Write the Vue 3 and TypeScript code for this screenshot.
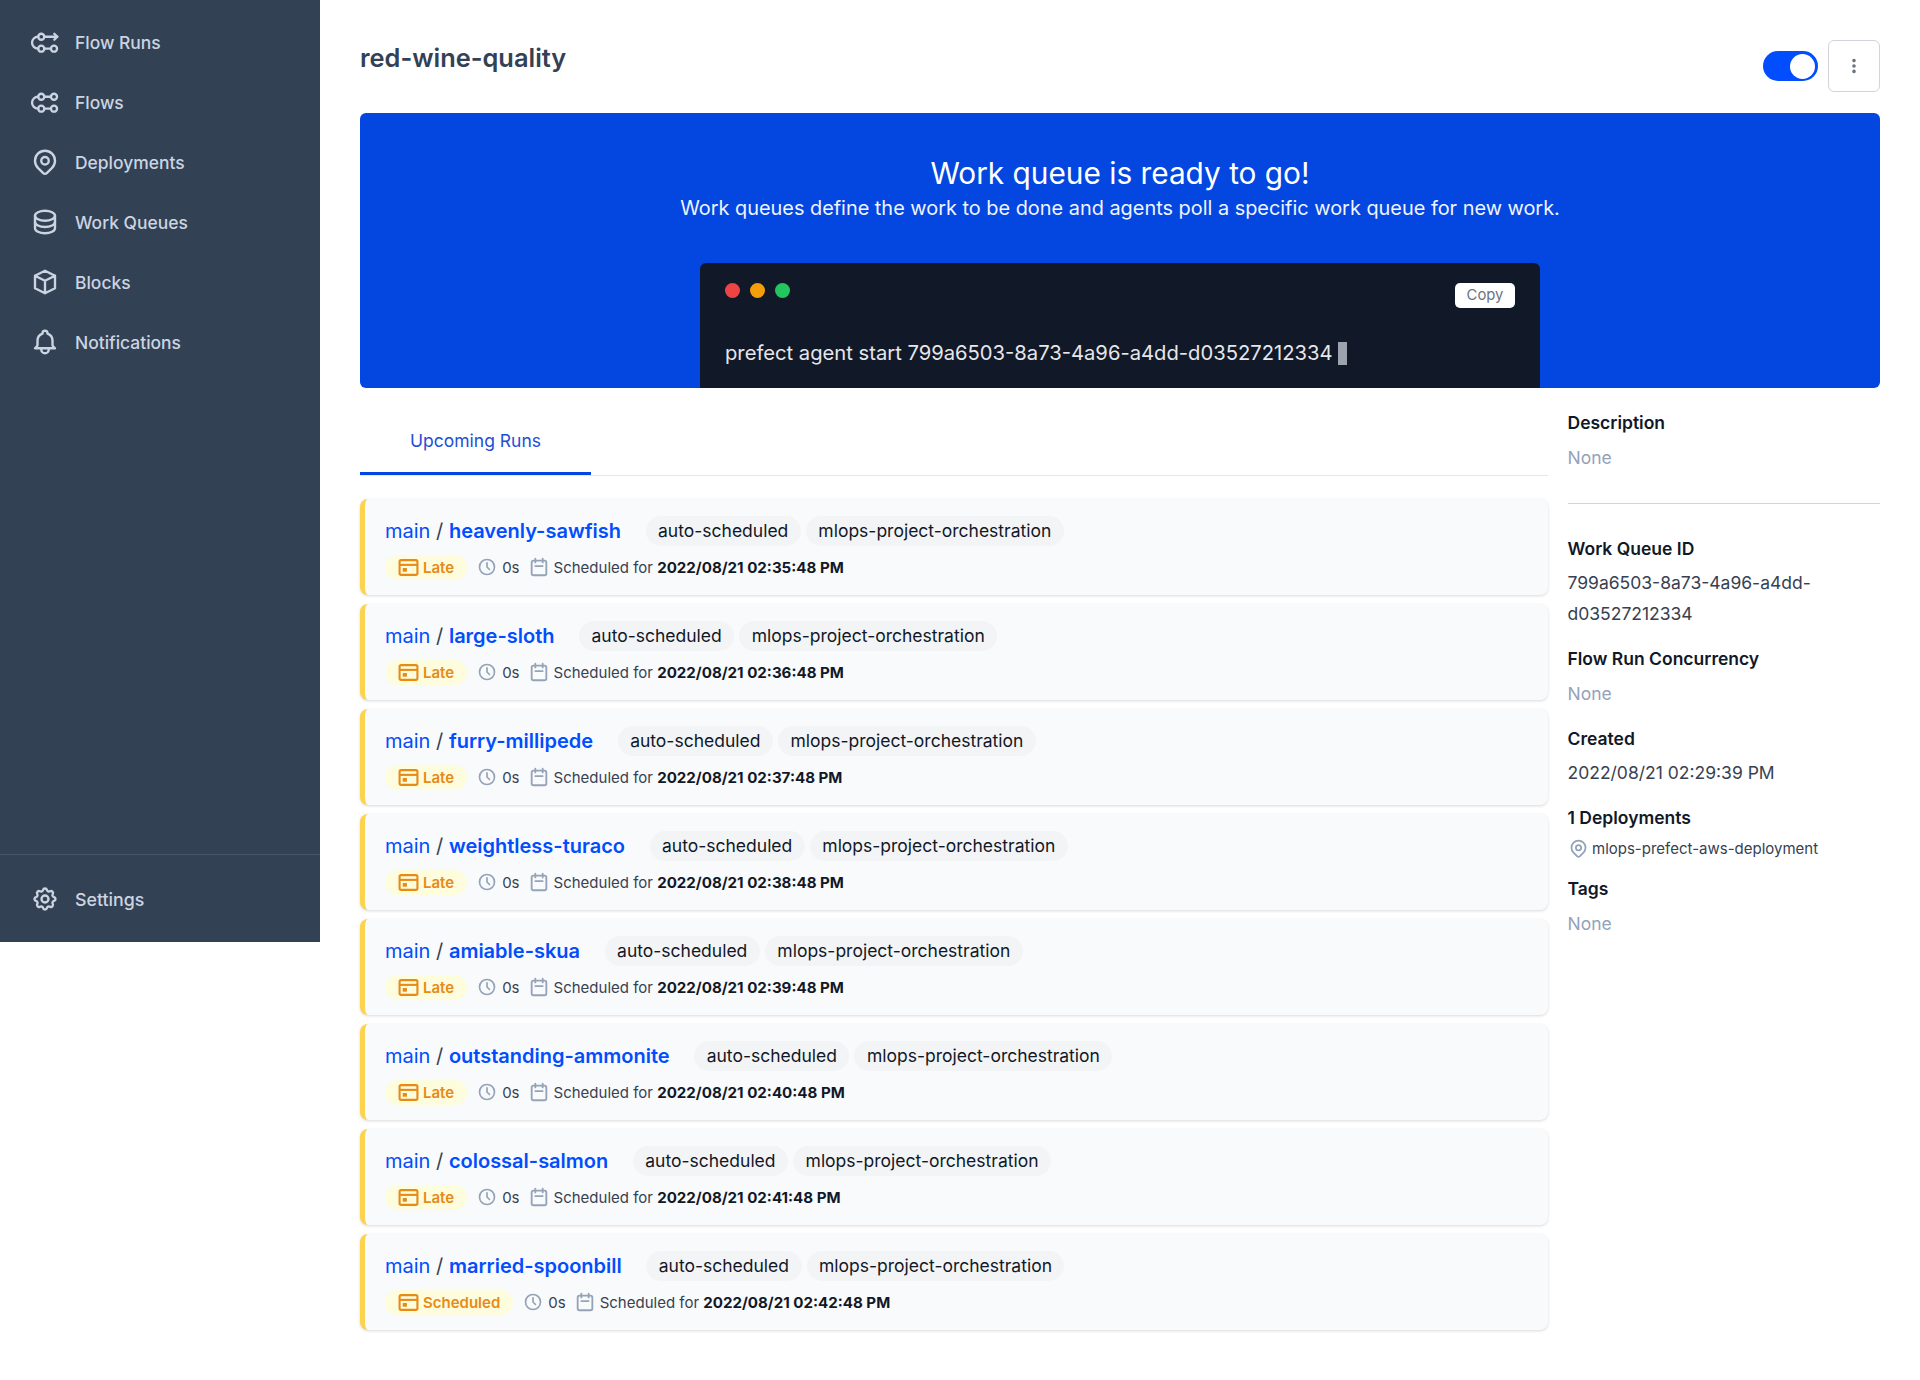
<template>
  <div class="app">
    <aside class="sidebar">
      <nav class="nav">
        <a v-for="item in navItems" :key="item.label" class="nav-item">
          <svg class="nav-icon" :viewBox="item.viewBox" fill="none" stroke="currentColor" :stroke-width="item.stroke" stroke-linecap="round" stroke-linejoin="round">
            <path v-for="d in item.paths" :key="d" :d="d" />
          </svg>
          <span>{{ item.label }}</span>
        </a>
      </nav>
      <div class="nav-bottom">
        <a class="nav-item">
          <svg class="nav-icon" viewBox="-0.85 -0.85 25.7 25.7" fill="none" stroke="currentColor" stroke-width="2" stroke-linecap="round" stroke-linejoin="round">
            <path d="M10.325 4.317c.426-1.756 2.924-1.756 3.35 0a1.724 1.724 0 0 0 2.573 1.066c1.543-.94 3.31.826 2.37 2.37a1.724 1.724 0 0 0 1.065 2.572c1.756.426 1.756 2.924 0 3.35a1.724 1.724 0 0 0-1.066 2.573c.94 1.543-.826 3.31-2.37 2.37a1.724 1.724 0 0 0-2.572 1.065c-.426 1.756-2.924 1.756-3.35 0a1.724 1.724 0 0 0-2.573-1.066c-1.543.94-3.31-.826-2.37-2.37a1.724 1.724 0 0 0-1.065-2.572c-1.756-.426-1.756-2.924 0-3.35a1.724 1.724 0 0 0 1.066-2.573c-.94-1.543.826-3.31 2.37-2.37.996.608 2.296.07 2.572-1.065z" />
            <path d="M15 12a3 3 0 1 1-6 0 3 3 0 0 1 6 0z" />
          </svg>
          <span>Settings</span>
        </a>
      </div>
    </aside>

    <main class="main">
      <header class="page-head">
        <h1>red-wine-quality</h1>
        <div class="head-actions">
          <span class="toggle"><span class="knob"></span></span>
          <button type="button" class="menu-button">
            <svg viewBox="0 0 20 20" fill="currentColor"><path d="M10 6a2 2 0 1 1 0-4 2 2 0 0 1 0 4zM10 12a2 2 0 1 1 0-4 2 2 0 0 1 0 4zM10 18a2 2 0 1 1 0-4 2 2 0 0 1 0 4z" /></svg>
          </button>
        </div>
      </header>

      <section class="banner">
        <h2>Work queue is ready to go!</h2>
        <p>Work queues define the work to be done and agents poll a specific work queue for new work.</p>
        <div class="terminal">
          <div class="terminal-top">
            <div class="dots">
              <i class="red"></i><i class="amber"></i><i class="green"></i>
            </div>
            <button type="button" class="copy">Copy</button>
          </div>
          <div class="command">prefect agent start 799a6503-8a73-4a96-a4dd-d03527212334<span class="cursor"></span></div>
        </div>
      </section>

      <div class="columns">
        <div class="left">
          <div class="tabs"><span class="tab">Upcoming Runs</span></div>
          <div class="runs">
            <article v-for="run in runs" :key="run.name" class="run">
              <div class="run-top">
                <span class="run-name"><a class="flow">main</a> / <a class="name">{{ run.name }}</a></span>
                <span class="tags">
                  <span class="tag">auto-scheduled</span>
                  <span class="tag">mlops-project-orchestration</span>
                </span>
              </div>
              <div class="run-meta">
                <span class="state">
                  <svg viewBox="0 0 20 20" fill="none" stroke="currentColor" stroke-width="2">
                    <rect x="1.5" y="3" width="17" height="14" rx="1.5" />
                    <path d="M1.5 7.5h17" />
                    <rect x="4.5" y="10.5" width="4" height="3.5" fill="currentColor" stroke="none" />
                  </svg>
                  {{ run.state }}
                </span>
                <span class="meta clock">
                  <svg viewBox="0 0 24 24" fill="none" stroke="currentColor" stroke-width="2" stroke-linecap="round" stroke-linejoin="round"><circle cx="12" cy="12" r="9" /><path d="M12 7v5l3 3" /></svg>
                  0s
                </span>
                <span class="meta calendar">
                  <svg viewBox="0 0 24 24" fill="none" stroke="currentColor" stroke-width="2" stroke-linecap="round" stroke-linejoin="round"><rect x="4" y="5" width="16" height="16" rx="2" /><path d="M8 3v4M16 3v4M8 11h8" /></svg>
                  <span>Scheduled for <b>{{ run.time }}</b></span>
                </span>
              </div>
            </article>
          </div>
        </div>

        <aside class="details">
          <div class="detail first">
            <h3>Description</h3>
            <p class="none">None</p>
          </div>
          <hr />
          <div class="detail">
            <h3>Work Queue ID</h3>
            <p>799a6503-8a73-4a96-a4dd-<br />d03527212334</p>
          </div>
          <div class="detail">
            <h3>Flow Run Concurrency</h3>
            <p class="none">None</p>
          </div>
          <div class="detail">
            <h3>Created</h3>
            <p>2022/08/21 02:29:39 PM</p>
          </div>
          <div class="detail">
            <h3>1 Deployments</h3>
            <div class="deployment">
              <svg viewBox="0 0 24 24" fill="none" stroke="currentColor" stroke-width="2" stroke-linecap="round" stroke-linejoin="round"><path d="M17.66 16.66 13.41 20.9a2 2 0 0 1-2.83 0l-4.24-4.24a8 8 0 1 1 11.32 0z" /><circle cx="12" cy="11" r="3" /></svg>
              mlops-prefect-aws-deployment
            </div>
          </div>
          <div class="detail">
            <h3>Tags</h3>
            <p class="none">None</p>
          </div>
        </aside>
      </div>
    </main>
  </div>
</template>

<script setup lang="ts">
interface NavItem {
  label: string;
  viewBox: string;
  stroke: number;
  paths: string[];
}

interface Run {
  name: string;
  state: string;
  time: string;
}

const flowBox = '-0.85 -0.85 25.7 25.7';

const flowPaths = [
  'M8.8 10.1a2.6 2.6 0 1 0 0-5.2 2.6 2.6 0 0 0 0 5.2z',
  'M8.8 20.3a2.6 2.6 0 1 0 0-5.2 2.6 2.6 0 0 0 0 5.2z',
  'M19.7 20.3a2.6 2.6 0 1 0 0-5.2 2.6 2.6 0 0 0 0 5.2z',
  'M11.4 17.7h5.7',
  'M6.2 7.5H6a5.1 5.1 0 0 0 0 10.2h.2'
];

const navItems: NavItem[] = [
  {
    label: 'Flow Runs',
    viewBox: flowBox,
    stroke: 2,
    paths: [...flowPaths, 'M11.4 7.5h11.1', 'M20 5l2.5 2.5L20 10']
  },
  {
    label: 'Flows',
    viewBox: flowBox,
    stroke: 2,
    paths: [...flowPaths, 'M11.4 7.5h5.7', 'M19.7 10.1a2.6 2.6 0 1 0 0-5.2 2.6 2.6 0 0 0 0 5.2z']
  },
  {
    label: 'Deployments',
    viewBox: '0 0 24 24',
    stroke: 1.9,
    paths: ['M17.66 16.66 13.41 20.9a2 2 0 0 1-2.83 0l-4.24-4.24a8 8 0 1 1 11.32 0z', 'M15 11a3 3 0 1 1-6 0 3 3 0 0 1 6 0z']
  },
  {
    label: 'Work Queues',
    viewBox: '0 0 24 24',
    stroke: 1.9,
    paths: ['M4 7c0 2.2 3.6 4 8 4s8-1.8 8-4-3.6-4-8-4-8 1.8-8 4z', 'M4 7v10c0 2.2 3.6 4 8 4s8-1.8 8-4V7', 'M4 12c0 2.2 3.6 4 8 4s8-1.8 8-4']
  },
  {
    label: 'Blocks',
    viewBox: '0 0 24 24',
    stroke: 1.9,
    paths: ['M20 7l-8-4-8 4m16 0l-8 4m8-4v10l-8 4m0-10L4 7m8 4v10M4 7v10l8 4']
  },
  {
    label: 'Notifications',
    viewBox: '0 0 24 24',
    stroke: 1.9,
    paths: ['M15 17h5l-1.405-1.405A2.032 2.032 0 0 1 18 14.158V11a6 6 0 0 0-4-5.659V5a2 2 0 1 0-4 0v.341C7.67 6.165 6 8.388 6 11v3.159c0 .538-.214 1.055-.595 1.436L4 17h5m6 0v1a3 3 0 1 1-6 0v-1m6 0H9']
  }
];

const runs: Run[] = [
  { name: 'heavenly-sawfish', state: 'Late', time: '2022/08/21 02:35:48 PM' },
  { name: 'large-sloth', state: 'Late', time: '2022/08/21 02:36:48 PM' },
  { name: 'furry-millipede', state: 'Late', time: '2022/08/21 02:37:48 PM' },
  { name: 'weightless-turaco', state: 'Late', time: '2022/08/21 02:38:48 PM' },
  { name: 'amiable-skua', state: 'Late', time: '2022/08/21 02:39:48 PM' },
  { name: 'outstanding-ammonite', state: 'Late', time: '2022/08/21 02:40:48 PM' },
  { name: 'colossal-salmon', state: 'Late', time: '2022/08/21 02:41:48 PM' },
  { name: 'married-spoonbill', state: 'Scheduled', time: '2022/08/21 02:42:48 PM' }
];
</script>

<style>
html,
body {
  margin: 0;
  background: #fff;
}
</style>

<style scoped>
.app {
  display: flex;
  align-items: flex-start;
  min-height: 1380px;
  font-family: Inter, "Liberation Sans", sans-serif;
  color: #1f2937;
}

.sidebar {
  flex: 0 0 320px;
  height: 942px;
  box-sizing: border-box;
  display: flex;
  flex-direction: column;
  justify-content: space-between;
  background: #334155;
}

.nav {
  padding-top: 12px;
}

.nav-item {
  display: flex;
  align-items: center;
  gap: 15px;
  height: 60px;
  padding-left: 30px;
  color: #cbd5e1;
  font-size: 17.45px;
  font-weight: 500;
}

.nav-icon {
  width: 30px;
  height: 30px;
  flex: none;
}

.nav-bottom {
  border-top: 1px solid #475569;
  padding: 14px 0 13px;
}

.nav-bottom .nav-item {
  font-size: 17.8px;
}

.main {
  flex: 1;
  min-width: 0;
  padding: 0 40px;
}

.page-head {
  display: flex;
  justify-content: space-between;
  height: 113px;
}

h1 {
  margin: 41.5px 0 0;
  font-size: 25.4px;
  line-height: 32px;
  font-weight: 600;
  color: #334155;
}

.head-actions {
  display: flex;
  align-items: center;
  gap: 10px;
  height: 52px;
  margin-top: 40px;
}

.toggle {
  display: block;
  width: 55px;
  height: 30px;
  border-radius: 15px;
  background: #024dfd;
  position: relative;
}

.knob {
  position: absolute;
  right: 3px;
  top: 2.5px;
  width: 25px;
  height: 25px;
  border-radius: 50%;
  background: #fff;
}

.menu-button {
  width: 52px;
  height: 52px;
  padding: 0;
  display: flex;
  align-items: center;
  justify-content: center;
  background: #fff;
  border: 1px solid #d1d5db;
  border-radius: 6px;
  color: #6b7280;
}

.menu-button svg {
  width: 18px;
  height: 18px;
}

.banner {
  height: 275px;
  box-sizing: border-box;
  padding-top: 42px;
  background: #0346e0;
  border-radius: 6px;
  color: #fff;
  text-align: center;
  overflow: hidden;
}

.banner h2 {
  margin: 0;
  font-size: 29.8px;
  line-height: 36px;
  font-weight: 400;
}

.banner p {
  margin: 3px 0 0;
  font-size: 19.9px;
  line-height: 28px;
  color: #eff4ff;
}

.terminal {
  width: 840px;
  height: 125px;
  box-sizing: border-box;
  margin: 41px auto 0;
  padding: 20px 25px;
  background: #111827;
  border-radius: 6px 6px 0 0;
  text-align: left;
}

.terminal-top {
  display: flex;
  justify-content: space-between;
  align-items: flex-start;
}

.dots {
  display: flex;
  gap: 10px;
}

.dots i {
  width: 15px;
  height: 15px;
  border-radius: 50%;
}

.red {
  background: #ef4444;
}

.amber {
  background: #f59e0b;
}

.green {
  background: #22c55e;
}

.copy {
  width: 60px;
  height: 25px;
  padding: 0 0 2px;
  border: 0;
  border-radius: 5px;
  background: #fff;
  color: #6b7280;
  font: 400 14.8px Inter, sans-serif;
}

.command {
  margin-top: 31px;
  font-size: 20.2px;
  line-height: 28px;
  color: #e5e7eb;
  display: flex;
  align-items: center;
}

.cursor {
  display: inline-block;
  width: 9px;
  height: 23px;
  margin-left: 6px;
  background: #9ca3af;
}

.columns {
  display: grid;
  grid-template-columns: 1188px 312.5px;
  gap: 19.5px;
}

.tabs {
  height: 88px;
  box-sizing: border-box;
  border-bottom: 1px solid #e5e7eb;
}

.tab {
  display: block;
  width: 231px;
  height: 87px;
  box-sizing: border-box;
  padding-top: 41px;
  text-align: center;
  font-size: 17.5px;
  line-height: 24px;
  font-weight: 400;
  color: #1d4ed8;
  border-bottom: 3px solid #0346e0;
}

.runs {
  display: flex;
  flex-direction: column;
  gap: 9px;
  margin-top: 23px;
}

.run {
  height: 96px;
  box-sizing: border-box;
  padding: 16px 20px 0;
  background: #f9fafb;
  border-left: 5px solid #fcd34d;
  border-radius: 8px;
  box-shadow: 0 1px 3px rgba(0, 0, 0, 0.15);
}

.run-top {
  display: flex;
  align-items: center;
  gap: 24.5px;
  height: 32px;
}

.run-name {
  margin-top: -1px;
  font-size: 20px;
  color: #374151;
  white-space: nowrap;
}

.flow {
  color: #024dfd;
}

.name {
  color: #024dfd;
  font-weight: 600;
}

.tags {
  display: flex;
  gap: 5px;
}

.tag {
  padding: 0 12.5px;
  height: 30px;
  line-height: 30px;
  border-radius: 15px;
  background: #f3f4f6;
  color: #111827;
  font-size: 17.5px;
}

.run-meta {
  display: flex;
  align-items: center;
  gap: 10px;
  margin-top: 7px;
  height: 26px;
  font-size: 15px;
  color: #374151;
}

.state {
  display: flex;
  align-items: center;
  gap: 4px;
  height: 25px;
  padding: 0 13px;
  border-radius: 13px;
  background: #fdfcdc;
  color: #e88a16;
  font-weight: 600;
}

.state svg {
  width: 21px;
  height: 21px;
}

.meta {
  display: flex;
  align-items: center;
}

.clock {
  gap: 5px;
}

.clock svg {
  width: 20px;
  height: 20px;
}

.calendar {
  gap: 3.5px;
  margin-left: -1.5px;
}

.calendar svg {
  width: 22px;
  height: 22px;
}

.meta svg {
  color: #94a3b8;
}

.meta b {
  color: #111827;
  font-weight: 700;
  font-size: 15.1px;
}

.details {
  padding-top: 22px;
}

.detail h3 {
  margin: 0;
  font-size: 17.5px;
  line-height: 25px;
  font-weight: 600;
  color: #111827;
}

.detail p {
  margin: 6.5px 0 0;
  font-size: 17.5px;
  line-height: 31px;
  color: #374151;
}

.detail p.none {
  color: #94a3b8;
}

.detail + .detail {
  margin-top: 17px;
}

hr {
  margin: 30.5px 0 31.5px;
  border: 0;
  border-top: 1px solid #d1d5db;
}

.deployment {
  display: flex;
  align-items: center;
  gap: 3.5px;
  margin-top: 8px;
  font-size: 15px;
  line-height: 21px;
  color: #374151;
}

.deployment svg {
  width: 21px;
  height: 21px;
  color: #94a3b8;
}
</style>
